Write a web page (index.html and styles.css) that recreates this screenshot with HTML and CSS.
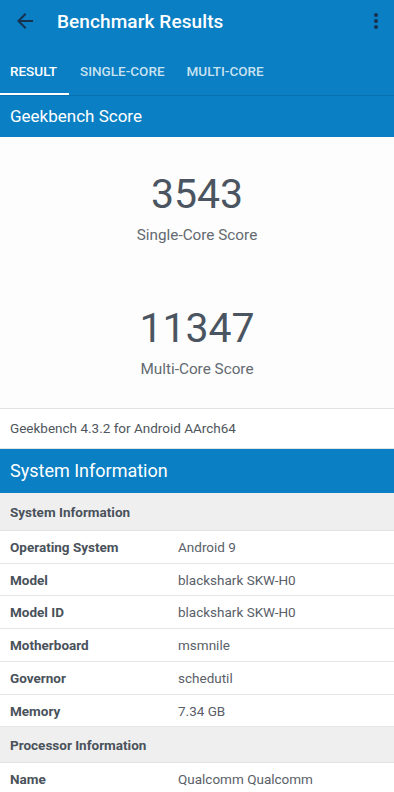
FILE: index.html
```html
<!DOCTYPE html>
<html lang="en">
<head>
    <meta charset="UTF-8">
    <meta name="viewport" content="width=device-width, initial-scale=1.0">
    <title>Benchmark Results</title>
    <link rel="stylesheet" href="styles.css">
</head>
<body>
    <header class="appbar">
        <div class="toolbar">
            <svg class="icon back" viewBox="0 0 24 24" width="24" height="24"><path d="M20 11H7.83l5.59-5.59L12 4l-8 8 8 8 1.41-1.41L7.83 13H20v-2z"/></svg>
            <h1 class="title">Benchmark Results</h1>
            <svg class="icon more" viewBox="0 0 24 24" width="24" height="24"><circle cx="12" cy="6" r="2"/><circle cx="12" cy="12" r="2"/><circle cx="12" cy="18" r="2"/></svg>
        </div>
        <nav class="tabs">
            <div class="tab active">RESULT</div>
            <div class="tab">SINGLE-CORE</div>
            <div class="tab">MULTI-CORE</div>
        </nav>
    </header>

    <div class="section-head">Geekbench Score</div>

    <div class="scores">
        <div class="score">
            <div class="score-num">3543</div>
            <div class="score-label">Single-Core Score</div>
        </div>
        <div class="score">
            <div class="score-num">11347</div>
            <div class="score-label">Multi-Core Score</div>
        </div>
    </div>

    <div class="version">Geekbench 4.3.2 for Android AArch64</div>

    <div class="section-head big">System Information</div>

    <div class="group">System Information</div>
    <div class="row"><span class="key">Operating System</span><span class="val">Android 9</span></div>
    <div class="row"><span class="key">Model</span><span class="val">blackshark SKW-H0</span></div>
    <div class="row"><span class="key">Model ID</span><span class="val">blackshark SKW-H0</span></div>
    <div class="row"><span class="key">Motherboard</span><span class="val">msmnile</span></div>
    <div class="row"><span class="key">Governor</span><span class="val">schedutil</span></div>
    <div class="row"><span class="key">Memory</span><span class="val">7.34 GB</span></div>

    <div class="group proc">Processor Information</div>
    <div class="row last"><span class="key">Name</span><span class="val">Qualcomm Qualcomm</span></div>
    <div class="edge"></div>
</body>
</html>
```

FILE: styles.css
```css
body {
    margin: 0;
    font-family: Roboto, "Noto Sans", Arial, sans-serif;
    background-color: #fdfdfd;
    color: #4a525b;
}
.appbar {
    background-color: #0a7fc3;
    color: white;
    border-bottom: 1px solid #0872b0;
}
.toolbar {
    height: 42px;
    display: flex;
    align-items: center;
    padding: 0 6px 0 13px;
}
.icon {
    fill: #17324e;
    flex: none;
}
.title {
    flex: 1;
    margin: 0 0 0 20px;
    font-size: 19px;
    font-weight: 500;
    letter-spacing: 0.1px;
}
.tabs {
    display: flex;
    height: 53px;
}
.tab {
    padding: 20px 11px 0 11px;
    font-size: 13.5px;
    font-weight: 500;
    line-height: 18px;
    color: rgba(255, 255, 255, 0.78);
    box-sizing: border-box;
    border-bottom: 2px solid transparent;
}
.tab.active {
    padding-left: 10px;
    padding-right: 12px;
    color: white;
    border-bottom-color: white;
}
.section-head {
    background-color: #0a7fc3;
    color: white;
    font-size: 17px;
    line-height: 41px;
    padding-left: 10px;
}
.section-head.big {
    font-size: 18px;
    line-height: 44px;
}
.scores {
    padding: 33px 0 28px 0;
    text-align: center;
    border-bottom: 1px solid #e2e2e2;
}
.score + .score {
    margin-top: 58px;
}
.score-num {
    font-size: 41px;
    line-height: 48px;
    color: #4b5561;
}
.score-label {
    margin-top: 6px;
    font-size: 15.3px;
    line-height: 22px;
    color: #646a70;
}
.version {
    background-color: white;
    font-size: 13.5px;
    line-height: 39px;
    padding-left: 10px;
    color: #50565d;
    border-bottom: 1px solid #e2e2e2;
}
.group {
    background-color: #efefef;
    font-size: 13.5px;
    font-weight: bold;
    line-height: 36px;
    padding: 1px 0 0 10px;
    border-bottom: 1px solid #e2e2e2;
}
.group.proc {
    line-height: 34px;
}
.row {
    display: flex;
    background-color: white;
    font-size: 13.5px;
    line-height: 29.7px;
    padding: 2px 0 0 10px;
    border-bottom: 1px solid #e6e6e6;
}
.row.last {
    line-height: 27px;
    padding-top: 3px;
    border-bottom: none;
}
.key {
    width: 168px;
    font-weight: bold;
    color: #4a525b;
}
.val {
    color: #5a6068;
}
.edge {
    height: 3px;
    background-color: #111;
}
```
